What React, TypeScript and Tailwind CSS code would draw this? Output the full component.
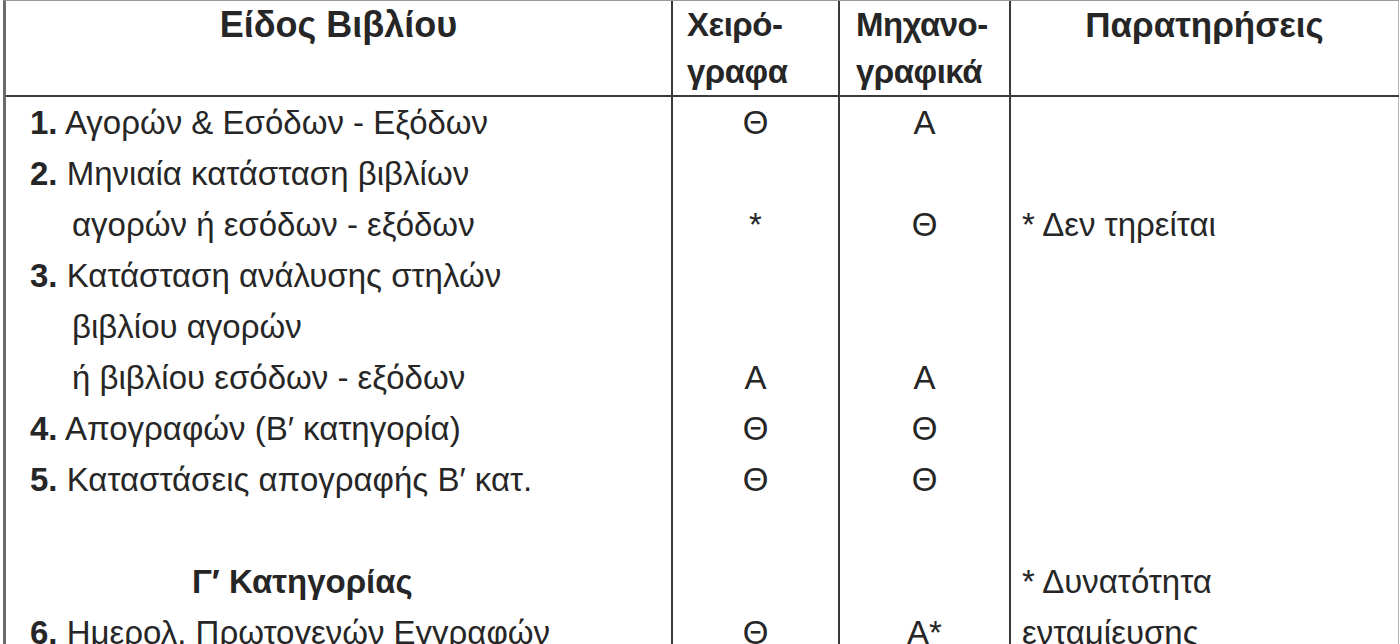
import React from "react";

type Row = {
  num?: string;
  text: string;
  indent?: boolean;
  heading?: boolean;
  c2?: string;
  c3?: string;
  c4?: string;
};

const rows: Row[] = [
  { num: "1.", text: "Αγορών & Εσόδων - Εξόδων", c2: "Θ", c3: "Α" },
  { num: "2.", text: "Μηνιαία κατάσταση βιβλίων" },
  { text: "αγορών ή εσόδων - εξόδων", indent: true, c2: "*", c3: "Θ", c4: "* Δεν τηρείται" },
  { num: "3.", text: "Κατάσταση ανάλυσης στηλών" },
  { text: "βιβλίου αγορών", indent: true },
  { text: "ή βιβλίου εσόδων - εξόδων", indent: true, c2: "Α", c3: "Α" },
  { num: "4.", text: "Απογραφών (Β′ κατηγορία)", c2: "Θ", c3: "Θ" },
  { num: "5.", text: "Καταστάσεις απογραφής Β′ κατ.", c2: "Θ", c3: "Θ" },
  { text: "" },
  { text: "Γ′ Κατηγορίας", heading: true, c4: "* Δυνατότητα" },
  { num: "6.", text: "Ημερολ. Πρωτογενών Εγγραφών", c2: "Θ", c3: "Α*", c4: "ενταμίευσης" },
];

const cols = "grid grid-cols-[667px_167px_171px_388px]";

export default function App() {
  return (
    <div
      className="min-h-[644px] bg-white text-[#262626] overflow-hidden"
      style={{ fontFamily: '"Liberation Sans", Arial, sans-serif' }}
    >
      <div className="ml-[3px] w-[1396px] border-l-[3px] border-l-[#6b6b6b] border-t border-t-[#9a9a9a]">
        {/* Header */}
        <div className={`${cols} h-[96px] border-b-2 border-b-[#3a3a3a] font-bold text-[35px] leading-[47px]`}>
          <div className="border-r-2 border-r-[#3a3a3a] text-center">
            <span className="inline-block text-[36px]">Είδος Βιβλίου</span>
          </div>
          <div className="border-r-2 border-r-[#3a3a3a] pl-[14px] text-[33px] tracking-[-0.5px]">
            <div>Χειρό-</div>
            <div>γραφα</div>
          </div>
          <div className="border-r-2 border-r-[#3a3a3a] pl-[16px] text-[33px] tracking-[-0.5px]">
            <div>Μηχανο-</div>
            <div>γραφικά</div>
          </div>
          <div className="border-r border-r-[#b5b5b5] text-center">Παρατηρήσεις</div>
        </div>
        {/* Body */}
        <div className="text-[33px] leading-[51px]">
          {rows.map((r, i) => (
            <div key={i} className={`${cols} h-[51px]`}>
              <div className="border-r-2 border-r-[#3a3a3a] whitespace-nowrap">
                {r.heading ? (
                  <span className="pl-[186px] font-bold">{r.text}</span>
                ) : (
                  <span className={r.indent ? "pl-[66px]" : "pl-[24px]"}>
                    {r.num && <span className="font-bold">{r.num}</span>}
                    {r.num ? " " : ""}
                    {r.text}
                  </span>
                )}
              </div>
              <div className="border-r-2 border-r-[#3a3a3a] text-center">{r.c2}</div>
              <div className="border-r-2 border-r-[#3a3a3a] text-center">{r.c3}</div>
              <div className="border-r border-r-[#b5b5b5] pl-[11px] whitespace-nowrap">{r.c4}</div>
            </div>
          ))}
        </div>
      </div>
    </div>
  );
}
